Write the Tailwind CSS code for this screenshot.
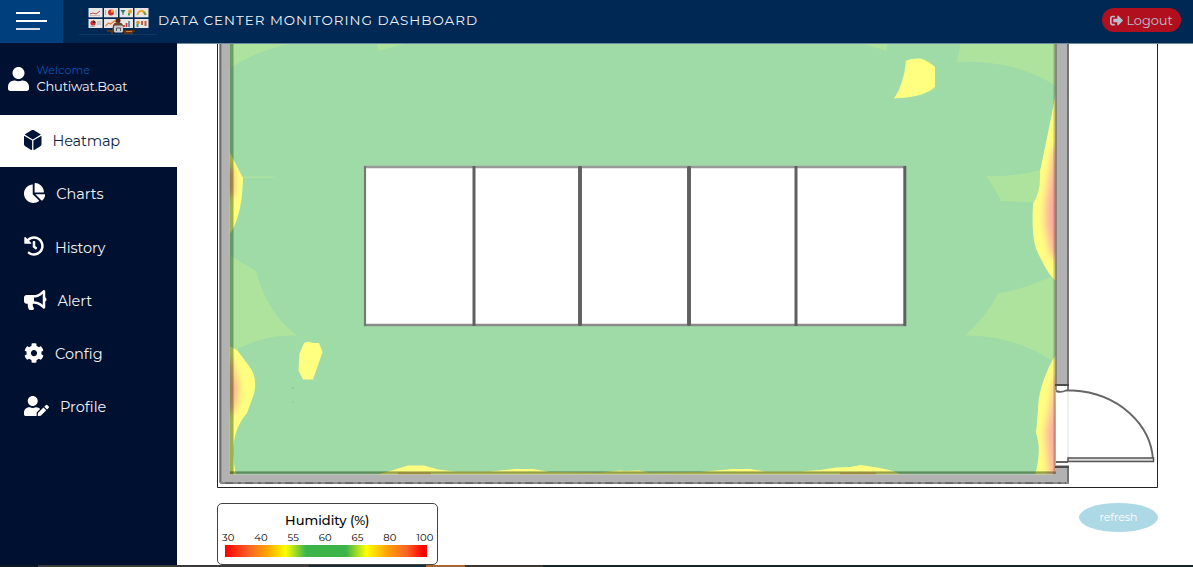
<!DOCTYPE html>
<html lang="en">
<head>
<meta charset="utf-8">
<title>Data Center Monitoring Dashboard</title>
<script src="https://cdn.jsdelivr.net/npm/@tailwindcss/browser@4"></script>
</head>
<body class="h-[567px] w-[1193px] overflow-hidden bg-white font-['Montserrat','Inter',sans-serif] flex flex-col">
<header class="flex h-[43px] shrink-0 items-center bg-[#002855]">
  <button class="flex h-[43px] w-[63px] shrink-0 flex-col items-start gap-[6px] bg-[#003f7d] pl-4 pt-3" aria-label="Menu">
    <span class="h-[2px] w-6 bg-white"></span>
    <span class="h-[2px] w-[31px] bg-white"></span>
    <span class="h-[2px] w-6 bg-[#d4dee8]"></span>
  </button>
  <svg class="ml-4 h-[43px] w-[79px] shrink-0" viewBox="79 0 79 43">
    <g fill="#e8e6e4">
      <rect x="88.500" y="8" width="14" height="9.300"/><rect x="104" y="8" width="14" height="9.300"/><rect x="119.500" y="8" width="13.500" height="9.300"/><rect x="134.500" y="8" width="14" height="9.300"/>
      <rect x="88.500" y="19" width="14" height="9"/><rect x="104" y="19" width="14" height="9"/><rect x="119.500" y="19" width="13.500" height="9"/><rect x="134.500" y="19" width="14" height="9"/>
    </g>
    <path d="M90 14l3-1 3 1 4-3" stroke="#c44a48" fill="none"/><path d="M90 15.500h10" stroke="#a8a4a4" stroke-width=".6"/>
    <circle cx="111" cy="12.500" r="3" fill="#d52b25"/><path d="M111 12.500V9.500a3 3 0 0 1 3 3z" fill="#f1a22a"/><path d="M105.500 10v5M116 10v5" stroke="#999" stroke-width=".7"/>
    <path d="M120.500 10h5l-2 3v2h-1v-2z" fill="#34726c"/><circle cx="130" cy="11.500" r="2" fill="#e4a22c"/><path d="M129 13v2.500" stroke="#4c9d55" stroke-width="2"/>
    <path d="M137.500 15a4 4 0 0 1 8 0" fill="none" stroke="#eda02b" stroke-width="2"/><path d="M143.500 12.300a4 4 0 0 1 2 2.700" fill="none" stroke="#69a04b" stroke-width="2"/>
    <circle cx="93" cy="23" r="2.600" fill="#d32c2b"/><path d="M93 23v-2.600a2.600 2.600 0 0 1 2.600 2.600z" fill="#333"/><path d="M97 22h4M97 24h4M90 26.500h5" stroke="#999" stroke-width=".7"/>
    <path d="M105.500 26l3-3 2 1 4-3 2 1" fill="none" stroke="#e87d2e" stroke-width="1.200"/>
    <path d="M124 27v-2M126.500 27v-4" stroke="#c33735" stroke-width="1.700"/><path d="M129 27v-6" stroke="#3875a5" stroke-width="1.500"/>
    <circle cx="138" cy="22.500" r="1.800" fill="#e38a30"/><path d="M137.500 24v3" stroke="#499967" stroke-width="2"/><path d="M142 21v4M145.500 21v5" stroke="#ba5e4c" stroke-width="2"/>
    <path d="M107 30h28v2h-2v2.500h-9V32h-11v2.500h-2V32h-4z" fill="#5c3318"/><path d="M126 31.500h6" stroke="#c68438"/>
    <circle cx="118" cy="20.500" r="2.500" fill="#4d2b18"/><path d="M112.500 30c0-7 2-7.500 5.500-7.500s5.500.500 5.500 7.500z" fill="#69452c"/>
    <rect x="114" y="25.500" width="9" height="7" rx="1.500" fill="#c9ccd0"/><path d="M116.500 31v-3h4v3" fill="none" stroke="#555" stroke-width="1"/><path d="M79 34.500h78" stroke="#183b60" stroke-width=".8"/>
  </svg>
  <h1 class="w-[330px] whitespace-nowrap pb-[3px] text-[13.500px] leading-5 tracking-[0.960px] text-[#eef2f6]">DATA CENTER MONITORING DASHBOARD</h1>
  <button class="ml-auto mr-3 mt-[-3px] flex h-[24px] w-[79px] items-center justify-center gap-[3px] rounded-full bg-[#b10f1d] text-[#b7c0d0]">
    <svg class="h-[13px] w-[13px]" viewBox="0 0 512 512" fill="currentColor"><path d="M497 273L329 441c-15 15-41 4.500-41-17v-96H152c-13.300 0-24-10.700-24-24v-96c0-13.300 10.700-24 24-24h136V88c0-21.400 25.900-32 41-17l168 168c9.300 9.400 9.300 24.600 0 34zM192 436v-40c0-6.600-5.400-12-12-12H96c-17.700 0-32-14.300-32-32V160c0-17.700 14.300-32 32-32h84c6.600 0 12-5.400 12-12V76c0-6.600-5.400-12-12-12H96c-53 0-96 43-96 96v192c0 53 43 96 96 96h84c6.600 0 12-5.400 12-12z"/></svg>
    <span class="text-[13px] leading-5 tracking-[-0.100px]">Logout</span>
  </button>
</header>
<div class="flex h-[522px] shrink-0">
  <aside class="w-[177px] shrink-0 bg-[#001030] text-[#f1f3f6]">
    <div class="flex h-[71.500px] items-center gap-[7.500px] pl-2">
      <svg class="h-[24px] w-[21px]" viewBox="0 0 448 512" fill="#fff"><path d="M224 256c70.700 0 128-57.300 128-128S294.700 0 224 0 96 57.300 96 128s57.300 128 128 128zm89.600 32h-16.700c-22.200 10.200-46.900 16-72.900 16s-50.600-5.800-72.900-16h-16.700C60.200 288 0 348.200 0 422.400V464c0 26.500 21.500 48 48 48h352c26.500 0 48-21.500 48-48v-41.600c0-74.200-60.200-134.400-134.400-134.400z"/></svg>
      <div class="pt-[1px]">
        <p class="text-[11px] leading-[15px] tracking-[0.150px] text-[#0a56b0]">Welcome</p>
        <p class="text-[13px] leading-[17px] tracking-[-0.200px]">Chutiwat.Boat</p>
      </div>
    </div>
    <nav class="text-[14.500px]">
      <a class="flex h-[52.500px] items-center gap-[11px] bg-white pl-6 text-[#0d1f44]">
        <svg class="mb-[1px] h-[20px] w-[17.500px]" viewBox="0 0 448 512" fill="#001437"><path d="M422.190 109.950L256.210 9.070c-19.910-12.100-44.520-12.100-64.430 0L25.810 109.950c-5.320 3.230-5.290 11.270.060 14.460L224 242.550l198.140-118.140c5.350-3.190 5.380-11.220.050-14.460zm13.840 44.630L240 271.460v223.820c0 12.880 13.390 20.910 24.050 14.430l152.160-92.520c19.680-11.960 31.790-33.940 31.790-57.700v-197.700c0-6.410-6.640-10.430-11.970-7.210zM0 161.790v197.700c0 23.760 12.110 45.740 31.790 57.700l152.160 92.520c10.670 6.480 24.050-1.540 24.050-14.430V271.460L11.970 154.580C6.640 151.370 0 155.380 0 161.790z"/></svg>
        <span class="pt-[2px] tracking-[-0.150px]">Heatmap</span></a>
      <a class="flex h-[53.300px] items-center gap-[11px] pl-6">
        <svg class="mb-[1px] h-[20px] w-[21.200px]" viewBox="0 0 544 512" fill="#fff"><path d="M527.790 288H290.500l158.030 158.030c6.040 6.040 15.980 6.530 22.190.680 38.700-36.460 65.320-85.610 73.130-140.860 1.340-9.460-6.510-17.850-16.060-17.850zm-15.830-64.800C503.720 103.740 408.260 8.280 288.800.040 279.680-.590 272 7.100 272 16.240V240h223.770c9.140 0 16.820-7.680 16.190-16.800zM224 288V50.710c0-9.550-8.390-17.400-17.840-16.060C86.990 51.490-4.100 155.600.140 280.370 4.500 408.510 114.830 513.590 243.030 511.980c50.400-.630 96.970-16.870 135.260-44.030 7.900-5.600 8.420-17.230 1.570-24.080L224 288z"/></svg>
        <span class="pt-[3px] tracking-[-0.050px]">Charts</span></a>
      <a class="flex h-[53.300px] items-center gap-[11px] pl-6">
        <svg class="mb-[1px] h-[20px] w-[20px]" viewBox="0 0 512 512" fill="#fff"><path d="M504 255.531c.253 136.640-111.180 248.372-247.820 248.468-59.015.042-113.223-20.530-155.822-54.911-11.077-8.940-11.905-25.541-1.839-35.607l11.267-11.267c8.609-8.609 22.353-9.551 31.891-1.984C173.062 425.135 212.781 440 256 440c101.705 0 184-82.311 184-184 0-101.705-82.311-184-184-184-48.814 0-93.149 18.969-126.068 49.932l50.754 50.754c10.080 10.080 2.941 27.314-11.313 27.314H24c-8.837 0-16-7.163-16-16V38.627c0-14.254 17.234-21.393 27.314-11.314l49.372 49.372C129.209 34.136 189.552 8 256 8c136.810 0 247.747 110.780 248 247.531zm-180.912 78.784l9.823-12.630c8.138-10.463 6.253-25.542-4.210-33.679L288 256.349V152c0-13.255-10.745-24-24-24h-16c-13.255 0-24 10.745-24 24v135.651l65.409 50.874c10.463 8.137 25.541 6.253 33.679-4.210z"/></svg>
        <span class="pt-[4px] tracking-[-0.100px]">History</span></a>
      <a class="flex h-[53.300px] items-center gap-[11px] pl-6">
        <svg class="mb-[1px] h-[20px] w-[22.500px]" viewBox="0 0 576 512" fill="#fff"><path d="M576 240c0-23.630-12.950-44.040-32-55.120V32.010C544 23.260 537.020 0 512 0c-7.120 0-14.190 2.380-19.980 7.020l-85.030 68.030C364.280 109.190 310.660 128 256 128H64c-35.350 0-64 28.650-64 64v96c0 35.350 28.650 64 64 64h33.700c-1.390 10.480-2.180 21.140-2.180 32 0 39.770 9.260 77.350 25.560 110.940 5.190 10.690 16.520 17.060 28.400 17.060h74.280c26.050 0 41.690-29.840 25.900-50.560-16.400-21.520-26.150-48.360-26.150-77.440 0-11.110 1.620-21.790 4.410-32H256c54.660 0 108.280 18.810 150.980 52.950l85.030 68.030a32.023 32.023 0 0 0 19.980 7.020c24.920 0 32-22.780 32-32V295.130C563.050 284.040 576 263.630 576 240zm-96 141.420l-33.050-26.440C392.950 311.780 325.120 288 256 288v-96c69.120 0 136.950-23.780 190.950-66.980L480 98.580v282.840z"/></svg>
        <span class="pt-[4px] tracking-[-0.100px]">Alert</span></a>
      <a class="flex h-[53.300px] items-center gap-[11px] pl-6">
        <svg class="mb-[1px] h-[20px] w-[20px]" viewBox="0 0 512 512" fill="#fff"><path d="M487.400 315.700l-42.600-24.600c4.300-23.200 4.300-47 0-70.200l42.600-24.600c4.900-2.800 7.100-8.600 5.500-14-11.100-35.600-30-67.800-54.700-94.600-3.800-4.100-10-5.100-14.800-2.300L380.800 110c-17.900-15.400-38.500-27.300-60.800-35.100V25.800c0-5.600-3.900-10.500-9.400-11.700-36.700-8.200-74.300-7.800-109.200 0-5.500 1.200-9.400 6.100-9.400 11.700V75c-22.200 7.900-42.800 19.800-60.800 35.100L88.700 85.500c-4.900-2.800-11-1.900-14.800 2.300-24.700 26.700-43.600 58.900-54.700 94.600-1.700 5.400.600 11.200 5.500 14L67.300 221c-4.300 23.200-4.300 47 0 70.200l-42.600 24.600c-4.900 2.800-7.100 8.600-5.500 14 11.100 35.600 30 67.800 54.700 94.600 3.800 4.100 10 5.100 14.800 2.300l42.600-24.600c17.900 15.400 38.500 27.300 60.800 35.100v49.200c0 5.600 3.900 10.500 9.400 11.700 36.700 8.200 74.300 7.800 109.200 0 5.500-1.200 9.400-6.100 9.400-11.700v-49.200c22.200-7.900 42.800-19.800 60.800-35.100l42.600 24.600c4.900 2.800 11 1.900 14.800-2.300 24.700-26.700 43.600-58.900 54.700-94.600 1.500-5.500-.700-11.300-5.600-14.100zM256 336c-44.100 0-80-35.900-80-80s35.900-80 80-80 80 35.900 80 80-35.900 80-80 80z"/></svg>
        <span class="pt-[3px]">Config</span></a>
      <a class="flex h-[53.300px] items-center gap-[11px] pl-6">
        <svg class="mb-[1px] h-[20px] w-[25px]" viewBox="0 0 640 512" fill="#fff"><path d="M224 256c70.700 0 128-57.300 128-128S294.700 0 224 0 96 57.300 96 128s57.300 128 128 128zm89.600 32h-16.700c-22.200 10.200-46.900 16-72.900 16s-50.600-5.800-72.900-16h-16.700C60.200 288 0 348.200 0 422.400V464c0 26.500 21.500 48 48 48h274.900c-2.400-6.800-3.400-14-2.600-21.300l6.800-60.900 1.200-11.100 7.900-7.900 77.300-77.300c-24.500-27.700-60-45.500-99.900-45.500zm45.300 145.300l-6.800 61c-1.100 10.200 7.500 18.800 17.600 17.600l60.900-6.800 137.900-137.900-71.700-71.700-137.900 137.800zM633 268.900L595.100 231c-9.300-9.300-24.500-9.300-33.800 0l-37.800 37.800-4.100 4.100 71.800 71.700 41.800-41.800c9.300-9.400 9.300-24.500 0-33.900z"/></svg>
        <span class="pt-[3px]">Profile</span></a>
    </nav>
  </aside>
  <main class="flex flex-1 flex-col border-t border-[#6d8a9f] pl-10 pr-[35px]">
    <svg class="h-[444px] w-[941px] shrink-0" viewBox="217 44 941 444">
      <defs>
        <filter id="soft" x="-20%" y="-20%" width="140%" height="140%"><feGaussianBlur stdDeviation=".5"/></filter>
        <filter id="line" filterUnits="userSpaceOnUse" x="217" y="43" width="941" height="445"><feGaussianBlur stdDeviation=".5"/></filter>
        <filter id="glow" x="-100%" y="-50%" width="300%" height="200%"><feGaussianBlur stdDeviation="4"/></filter>
        <clipPath id="room"><rect x="229.500" y="43" width="826.500" height="431.500"/></clipPath>
        <clipPath id="hotR"><path d="M1056 92L1048 133 1040 171Q1041 192 1033 204Q1031 240 1038 253Q1048 275 1056 281z"/></clipPath>
        <clipPath id="hotB"><path d="M1056 355L1052 361Q1038 388 1038 410L1036 433Q1042 450 1035 475H1056z"/></clipPath>
        <clipPath id="hotL"><path d="M229 346L237 350 249 366Q258 377 254 394L247 413Q227 436 236 475H229z"/></clipPath>
        <clipPath id="hotU"><path d="M229 151L243 178Q242 218 229 235z"/></clipPath>
      </defs>
      <rect x="217" y="43" width="941" height="445" fill="#fff"/>
      <g clip-path="url(#room)">
        <rect x="229" y="43" width="828" height="432" fill="#9edba6"/>
        <g fill="#ade39d">
          <path d="M229 43H298Q262 47 229 69z"/><path d="M377 43H408L378 51z"/><path d="M860 43h27v8z"/>
          <path d="M960 43H1057V87Q1015 59 956.500 62Q960 52 960 43z"/>
          <path d="M986 176Q1015 177 1041 170V203L1001 201Q996 190 986 176z"/>
          <path d="M1057 274Q1020 291 998 293Q988 315 965 335.500Q1015 335 1057 364z"/>
          <path d="M229 255L256 271Q267 313 297 335.500Q263 334 229 353z"/>
          <path d="M243 176.500h33l-5 1.500h-28z"/>
        </g>
        <g fill="#ffff80">
          <path d="M1056 92L1048 133 1040 171Q1041 192 1033 204Q1031 240 1038 253Q1048 275 1056 281z"/>
          <path d="M1056 355L1052 361Q1038 388 1038 410L1036 433Q1042 450 1035 475H1056z"/>
          <path d="M229 346L237 350 249 366Q258 377 254 394L247 413Q227 436 236 475H229z"/>
          <path d="M229 151L243 178Q242 218 229 235z"/>
          <path d="M376 475L393 470 408 465.500 424 465.500 438 469.500 455 471.500 490 471.500 515 469 533 469 550 472 600 472.500 620 470.500 624 471 639 470.500 650 472.500 700 472 732 469 750 469 765 471.500 800 471.500 820 470 836 467.500 850 467 861 465 880 468 893 471 902 475z"/>
          <path filter="url(#soft)" d="M304 343l4-1.500 5 1.500 6 0 3.500 9-6.500 19-3 8.500h-10l-4.500-9 1-17z"/>
          <path filter="url(#soft)" d="M906 61Q910 58 920 58.500Q927 60 935 67V87Q925 97 894 98.500Q904 84 906 61z"/>
        </g>
        <g clip-path="url(#hotR)"><path filter="url(#glow)" fill="#fba8a0" d="M1054 150L1046 205L1046 225L1052 256L1066 262V140z"/></g>
        <g clip-path="url(#hotB)"><path filter="url(#glow)" fill="#fbaca0" d="M1056 376L1051 408L1046 432L1050 475V485H1072V376z"/></g>
        <g clip-path="url(#hotL)"><path filter="url(#glow)" fill="#fba48c" d="M214 360H231L238 390L234 412H214z"/></g>
        <g clip-path="url(#hotU)"><path filter="url(#glow)" fill="#f47a6c" d="M216 168H232V196H216z"/></g>
        <g filter="url(#soft)" fill="#ee8550" opacity=".5"><path d="M398 472.500h33v3h-33z"/><path d="M840 472.500h36v3h-36z"/></g>
        <rect x="229" y="43" width="4.500" height="432" fill="#003000" opacity=".38" filter="url(#line)"/>
        <rect x="229" y="471.500" width="827" height="3" fill="#102800" opacity=".36"/>
        <rect x="230" y="471.500" width="824" height="1" fill="#002800" opacity=".2"/>
        <rect x="1053.500" y="43" width="2" height="432" fill="#300000" opacity=".23"/>
      </g>
      <g fill="#b2b2b2">
        <path d="M219 43H229.500V474.500H1056V465H1069V483H219z"/><path d="M1056 43H1068.500V386H1056z"/>
      </g>
      <g filter="url(#line)" fill="none">
        <path d="M220.500 43V482M1068 43V390M1068 466V482" stroke="#6c6c6c" stroke-width="1.800"/>
        <path d="M1056 43V390" stroke="#777" stroke-width="1.500"/>
        <path d="M220 483H1069" stroke="#888" stroke-width="2"/><path d="M225 483H1066" stroke="#606060" stroke-width="1.500" stroke-dasharray="8 5 3 4"/>
        <path d="M1055 385H1069M1055 467H1069" stroke="#4c4c4c" stroke-width="2"/>
        <path d="M1056 391Q1061 393 1066 390.500H1073C1118 393 1151 424 1153 460M1056 462H1068" stroke="#666" stroke-width="1.900"/>
        <path d="M1068 392V458" stroke="#ddd"/>
        <path d="M1068 458H1153.500V461.500H1068z" stroke="#555" stroke-width="1.500" fill="#ddd"/>
      </g>
      <rect x="364.500" y="166.500" width="541" height="159" fill="#fff"/>
      <g filter="url(#line)" fill="none">
        <path d="M364 167H906" stroke="#9a9a9a" stroke-width="2.500"/><path d="M364 325H906" stroke="#8a8a8a" stroke-width="2.500"/>
        <path d="M365 166V326" stroke="#777" stroke-width="2.200"/>
        <path d="M474 166V326M580 166V326M689 166V326M796 166V326M904.800 166V326" stroke="#606060" stroke-width="3"/>
        <path d="M580 167V325M689 167V325" stroke="#606060" stroke-width="3.800"/>
      </g>
      <path d="M217.500 43V487.500H1157.500V43" fill="none" stroke="#222"/>
      <g fill="#7bb987"><circle cx="293" cy="388" r=".8"/><circle cx="293" cy="402" r=".6"/></g>
    </svg>
    <div class="flex items-start justify-between pt-[15px]">
      <section class="h-[62px] w-[220.500px] rounded-[5px] border border-[#444] px-[7px] pt-[8px] text-black">
        <h2 class="text-center text-[13px] font-medium leading-[17px]">Humidity (%)</h2>
        <div class="-ml-[3px] -mr-[4px] flex justify-between pt-[2px] text-[10px] leading-[14px] tracking-[0.100px]"><span>30</span><span>40</span><span>55</span><span>60</span><span>65</span><span>80</span><span>100</span></div>
        <div class="ml-0 h-[12px] w-[202px] bg-[linear-gradient(90deg,#ff0000_0%,#f96326_12%,#ffa500_21%,#ffff00_30%,#3bb54a_40%,#3bb54a_60%,#ffff00_70%,#ff9c08_81%,#f96326_90%,#ff0000_98%)]"></div>
      </section>
      <button class="h-[29px] w-[79px] rounded-[50%] bg-[#add8e6] text-[11px] leading-[27px] tracking-[-0.050px] text-white">refresh</button>
    </div>
  </main>
</div>
<div class="flex h-[2px] shrink-0"><span class="w-[38px] bg-[#10161d]"></span><span class="w-[271px] bg-[#3a3a3a]"></span><span class="w-[117px] bg-[#182b30]"></span><span class="w-[39px] bg-[#a9662d]"></span><span class="w-[78px] bg-[#3a352d]"></span><span class="flex-1 bg-[#12262a]"></span></div>
</body>
</html>
